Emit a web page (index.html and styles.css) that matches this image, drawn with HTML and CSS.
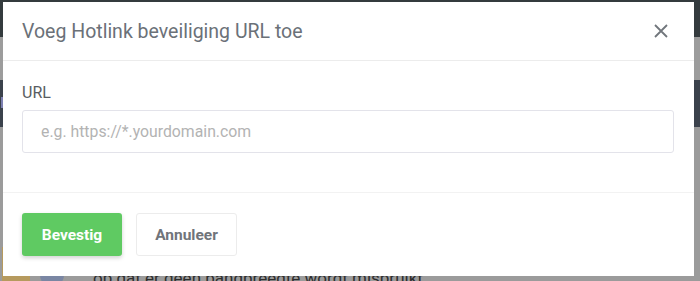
FILE: index.html
```html
<!DOCTYPE HTML>
<html>

<head>
  <meta charset="UTF-8">
  <title>Hotlink beveiliging</title>

  <link rel="stylesheet" href="styles.css">

</head>

<body>
  <div class="page">
    <div class="topbar"></div>
    <div class="nav"></div>
    <div class="subbar"><span class="mark"></span></div>
    <div class="content">
      <span class="thumb"></span>
      <span class="avatar"></span>
      <p class="behind-text">op dat er geen bandbreedte wordt misbruikt.</p>
    </div>
  </div>

  <div class="modal">
    <div class="modal-header">
      <h4 class="modal-title">Voeg Hotlink beveiliging URL toe</h4>
      <button class="close" type="button" aria-label="Sluiten">
        <svg width="14" height="14" viewBox="0 0 14 14">
          <path d="M1 1L13 13M13 1L1 13" stroke="currentColor" stroke-width="1.8" fill="none"/>
        </svg>
      </button>
    </div>
    <div class="modal-body">
      <label class="label" for="url">URL</label>
      <input class="input" id="url" type="text" placeholder="e.g. https://*.yourdomain.com">
    </div>
    <div class="modal-footer">
      <button class="btn btn-ok" type="button">Bevestig</button>
      <button class="btn btn-cancel" type="button">Annuleer</button>
    </div>
  </div>
</body>

</html>
```

FILE: styles.css
```css
html, body {
  margin: 0;
  height: 100%;
  overflow: hidden;
}

body {
  font-family: Roboto, "Liberation Sans", sans-serif;
  position: relative;
}

/* page under the overlay */
.page {
  display: flex;
  flex-direction: column;
  height: 100%;
  background-color: #9b9b9b;
}

.topbar {
  height: 37px;
  background-color: #343b3e;
}

.nav {
  height: 43px;
  background-color: #9c9c9c;
}

.subbar {
  height: 47px;
  background-color: #3b424c;
  position: relative;
}

.mark {
  position: absolute;
  left: 1px;
  top: 17px;
  width: 3px;
  height: 11px;
  background-color: #7c7fb0;
}

.content {
  flex: 1;
  position: relative;
}

.thumb {
  position: absolute;
  left: 2px;
  top: 120px;
  width: 28px;
  height: 40px;
  background-color: #b69a5e;
}

.avatar {
  position: absolute;
  left: 40px;
  top: 136px;
  width: 24px;
  height: 24px;
  border-radius: 50%;
  background-color: #7a86a3;
}

.behind-text {
  margin: 0;
  position: absolute;
  left: 93px;
  top: 141px;
  font-size: 17px;
  color: #2e2e2e;
  white-space: nowrap;
}

/* modal */
.modal {
  position: absolute;
  left: 3px;
  top: 2px;
  width: 691px;
  height: 274px;
  background-color: #fff;
  display: flex;
  flex-direction: column;
}

.modal-header {
  height: 58px;
  flex: none;
  border-bottom: 1px solid #ececec;
  display: flex;
  align-items: center;
  justify-content: space-between;
  padding: 0 26px 0 19px;
}

.modal-title {
  margin: 0;
  font-size: 19.5px;
  font-weight: 400;
  color: #6b7178;
}

.close {
  border: none;
  background: none;
  padding: 0;
  color: #71767c;
  display: flex;
}

.modal-body {
  height: 132px;
  flex: none;
  border-bottom: 1px solid #f2f2f2;
  padding: 0 19px;
  box-sizing: border-box;
  display: flex;
  flex-direction: column;
}

.label {
  margin-top: 23px;
  font-size: 16px;
  color: #595d62;
  line-height: 18px;
}

.input {
  margin-top: 8px;
  width: 652px;
  height: 43px;
  box-sizing: border-box;
  border: 1px solid #e3e3ea;
  border-radius: 3px;
  padding: 0 18px;
  font-family: inherit;
  font-size: 15.8px;
  color: #333;
  outline: none;
}

.input::placeholder {
  color: #b3b3b3;
}

.modal-footer {
  flex: 1;
  display: flex;
  align-items: flex-start;
  gap: 14px;
  padding: 20px 19px 0;
}

.btn {
  height: 43px;
  border-radius: 3px;
  font-family: inherit;
  font-size: 15.5px;
  font-weight: 700;
  padding: 0;
}

.btn-ok {
  width: 100px;
  border: none;
  background-color: #5fca62;
  color: #fff;
  box-shadow: 0 2px 4px rgba(0, 0, 0, 0.18);
}

.btn-cancel {
  width: 101px;
  border: 1px solid #ececec;
  background-color: #fff;
  color: #70747a;
}
```
